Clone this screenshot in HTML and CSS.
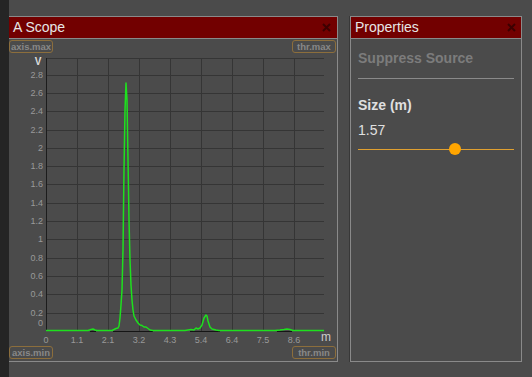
FILE: index.html
```html
<!DOCTYPE html>
<html lang="en">
<head>
    <meta charset="UTF-8">
    <title>A Scope</title>
    <link rel="stylesheet" href="styles.css">
</head>
<body>
    <div class="sidebar"></div>
    <div class="workspace">
        <!-- Scope panel -->
        <div class="panel scope-panel">
            <div class="panel-title">
                <span>A Scope</span>
                <svg class="close-icon" width="9" height="9" viewBox="0 0 9 9"><path d="M1 1 L8 8 M8 1 L1 8" stroke="#3d0000" stroke-width="2"/></svg>
            </div>
            <div class="scope-body">
                <div class="btn-row top-row">
                    <div class="scope-btn">axis.max</div>
                    <div class="scope-btn">thr.max</div>
                </div>
                <svg class="chart" width="328" height="292" viewBox="0 0 328 292">
                    <g class="grid" stroke="#353535" stroke-width="1">
                        <line x1="37" y1="4.5" x2="315" y2="4.5"/>
                        <line x1="37" y1="21.5" x2="315" y2="21.5"/>
                        <line x1="37" y1="39.5" x2="315" y2="39.5"/>
                        <line x1="37" y1="57.5" x2="315" y2="57.5"/>
                        <line x1="37" y1="76.5" x2="315" y2="76.5"/>
                        <line x1="37" y1="94.5" x2="315" y2="94.5"/>
                        <line x1="37" y1="112.5" x2="315" y2="112.5"/>
                        <line x1="37" y1="130.5" x2="315" y2="130.5"/>
                        <line x1="37" y1="149.5" x2="315" y2="149.5"/>
                        <line x1="37" y1="167.5" x2="315" y2="167.5"/>
                        <line x1="37" y1="185.5" x2="315" y2="185.5"/>
                        <line x1="37" y1="204.5" x2="315" y2="204.5"/>
                        <line x1="37" y1="222.5" x2="315" y2="222.5"/>
                        <line x1="37" y1="240.5" x2="315" y2="240.5"/>
                        <line x1="37" y1="259.5" x2="315" y2="259.5"/>
                        <line x1="68.5" y1="4" x2="68.5" y2="277"/>
                        <line x1="99.5" y1="4" x2="99.5" y2="277"/>
                        <line x1="130.5" y1="4" x2="130.5" y2="277"/>
                        <line x1="161.5" y1="4" x2="161.5" y2="277"/>
                        <line x1="192.5" y1="4" x2="192.5" y2="277"/>
                        <line x1="223.5" y1="4" x2="223.5" y2="277"/>
                        <line x1="254.5" y1="4" x2="254.5" y2="277"/>
                        <line x1="285.5" y1="4" x2="285.5" y2="277"/>
                    </g>
                    <line x1="37.5" y1="4" x2="37.5" y2="277" stroke="#1c1c1c" stroke-width="1"/>

                    <g class="tick-y" text-anchor="end">
                        <text x="34" y="24">2.8</text>
                        <text x="34" y="42">2.6</text>
                        <text x="34" y="60">2.4</text>
                        <text x="34" y="79">2.2</text>
                        <text x="34" y="97">2</text>
                        <text x="34" y="115">1.8</text>
                        <text x="34" y="133">1.6</text>
                        <text x="34" y="152">1.4</text>
                        <text x="34" y="170">1.2</text>
                        <text x="34" y="188">1</text>
                        <text x="34" y="207">0.8</text>
                        <text x="34" y="225">0.6</text>
                        <text x="34" y="243">0.4</text>
                        <text x="34" y="262">0.2</text>
                        <text x="34" y="272">0</text>
                    </g>
                    <g class="tick-x" text-anchor="middle">
                        <text x="37" y="289">0</text>
                        <text x="68" y="289">1.1</text>
                        <text x="99" y="289">2.1</text>
                        <text x="130" y="289">3.2</text>
                        <text x="161" y="289">4.3</text>
                        <text x="192" y="289">5.4</text>
                        <text x="223" y="289">6.4</text>
                        <text x="254" y="289">7.5</text>
                        <text x="285" y="289">8.6</text>
                    </g>
                    <text class="unit-v" x="29" y="11" text-anchor="middle">V</text>
                    <text class="unit-m" x="317" y="287" text-anchor="middle">m</text>

                    <g stroke="#151515" stroke-width="1">
                        <line x1="81" y1="277.5" x2="87" y2="277.5"/>
                        <line x1="104" y1="277.5" x2="144" y2="277.5"/>
                        <line x1="181" y1="277.5" x2="211" y2="277.5"/>
                        <line x1="268" y1="277.5" x2="283" y2="277.5"/>
                    </g>
                    <polyline class="trace" points="37,276.5 79,276.5 82,275.5 84,275 86,276 88,276.5 103,276.5 105,275.5 107,274.5 109,274 110,272 111,264 112,251 113,236 114,196 115,116 116,56 117,29 118,46 119,106 120,166 121,206 122,231 123,246 124,256 125,262 127,266 129,269 131,271 133,271.5 135,273 137,273 139,274.5 141,276 144,276.5 176,276.5 179,276 182,275.5 185,276 187,274 189,275 191,274 193,271 195,264 197,261 198,262 199,267 201,273 203,275 205,275.5 207,276 210,276.5 266,276.5 271,276 275,275.5 278,275 281,275.5 284,276.5 315,276.5"/>
                </svg>
                <div class="btn-row bottom-row">
                    <div class="scope-btn">axis.min</div>
                    <div class="scope-btn">thr.min</div>
                </div>
            </div>
        </div>

        <!-- Properties panel -->
        <div class="panel props-panel">
            <div class="panel-title">
                <span>Properties</span>
                <svg class="close-icon" width="9" height="9" viewBox="0 0 9 9"><path d="M1 1 L8 8 M8 1 L1 8" stroke="#3d0000" stroke-width="2"/></svg>
            </div>
            <div class="props-body">
                <div class="prop-disabled">Suppress Source</div>
                <div class="prop-divider"></div>
                <div class="prop-label">Size (m)</div>
                <div class="prop-value">1.57</div>
                <div class="slider">
                    <div class="slider-track"></div>
                    <div class="slider-thumb" style="left: 62%;"></div>
                </div>
            </div>
        </div>
    </div>
</body>
</html>
```

FILE: styles.css
```css
/* General Styles */
body {
    margin: 0;
    padding: 0;
    display: flex;
    height: 377px;
    background-color: #4b4b4b;
    font-family: "Liberation Sans", Arial, sans-serif;
    overflow: hidden;
}

.sidebar {
    width: 9px;
    background-color: #252525;
}

.workspace {
    display: flex;
    gap: 12px;
    padding-top: 16px;
}

/* Panels */
.panel {
    height: 346px;
    box-sizing: border-box;
    border: 1px solid #8a8a8a;
    display: flex;
    flex-direction: column;
}

.scope-panel {
    width: 329px;
    border-left: none;
}

.props-panel {
    width: 172px;
    box-shadow: -1px 0 0 #383838;
}

.panel-title {
    height: 21px;
    line-height: 21px;
    background-color: #720000;
    color: #e6e6e6;
    font-size: 14px;
    border-bottom: 1px solid #8a8a8a;
    display: flex;
    justify-content: space-between;
    align-items: center;
    padding: 0 6px 0 4px;
}

.props-panel .panel-title {
    padding: 0 5px 0 4px;
}

.close-icon {
    display: block;
}

/* Scope */
.scope-body {
    flex: 1;
    display: flex;
    flex-direction: column;
}

.btn-row {
    display: flex;
    justify-content: space-between;
    padding-right: 1px;
}

.top-row {
    height: 15px;
    padding-top: 1px;
    box-sizing: border-box;
}

.bottom-row {
    height: 13px;
}

.scope-btn {
    width: 44px;
    height: 13px;
    box-sizing: border-box;
    border: 1px solid #8c6e3c;
    border-radius: 3px;
    color: #888888;
    font-size: 9.5px;
    font-weight: bold;
    line-height: 11px;
    text-align: center;
}

.chart {
    display: block;
}

.tick-y text,
.tick-x text {
    font-family: "Liberation Sans", Arial, sans-serif;
    font-size: 9px;
    fill: #999999;
}

.unit-v {
    font-family: "Liberation Sans", Arial, sans-serif;
    font-size: 10px;
    font-weight: bold;
    fill: #dddddd;
}

.unit-m {
    font-family: "Liberation Sans", Arial, sans-serif;
    font-size: 12px;
    fill: #cccccc;
}

.trace {
    fill: none;
    stroke: #1ee01e;
    stroke-width: 1.5;
    stroke-linejoin: round;
}

/* Properties */
.props-body {
    padding: 11px 7px 0 7px;
    font-size: 14px;
    line-height: 16px;
}

.prop-disabled {
    color: #7c7c7c;
    font-weight: bold;
}

.prop-divider {
    margin-top: 12px;
    border-top: 1px solid #8a8a8a;
}

.prop-label {
    margin-top: 18px;
    color: #e0e0e0;
    font-weight: bold;
}

.prop-value {
    margin-top: 9px;
    color: #e0e0e0;
}

.slider {
    position: relative;
    height: 12px;
    margin-top: 5px;
}

.slider-track {
    position: absolute;
    left: 0;
    right: 0;
    top: 6px;
    height: 1px;
    background-color: #e0a030;
}

.slider-thumb {
    position: absolute;
    top: 0;
    width: 12px;
    height: 12px;
    border-radius: 50%;
    background-color: #ffa500;
    transform: translateX(-50%);
}
```
